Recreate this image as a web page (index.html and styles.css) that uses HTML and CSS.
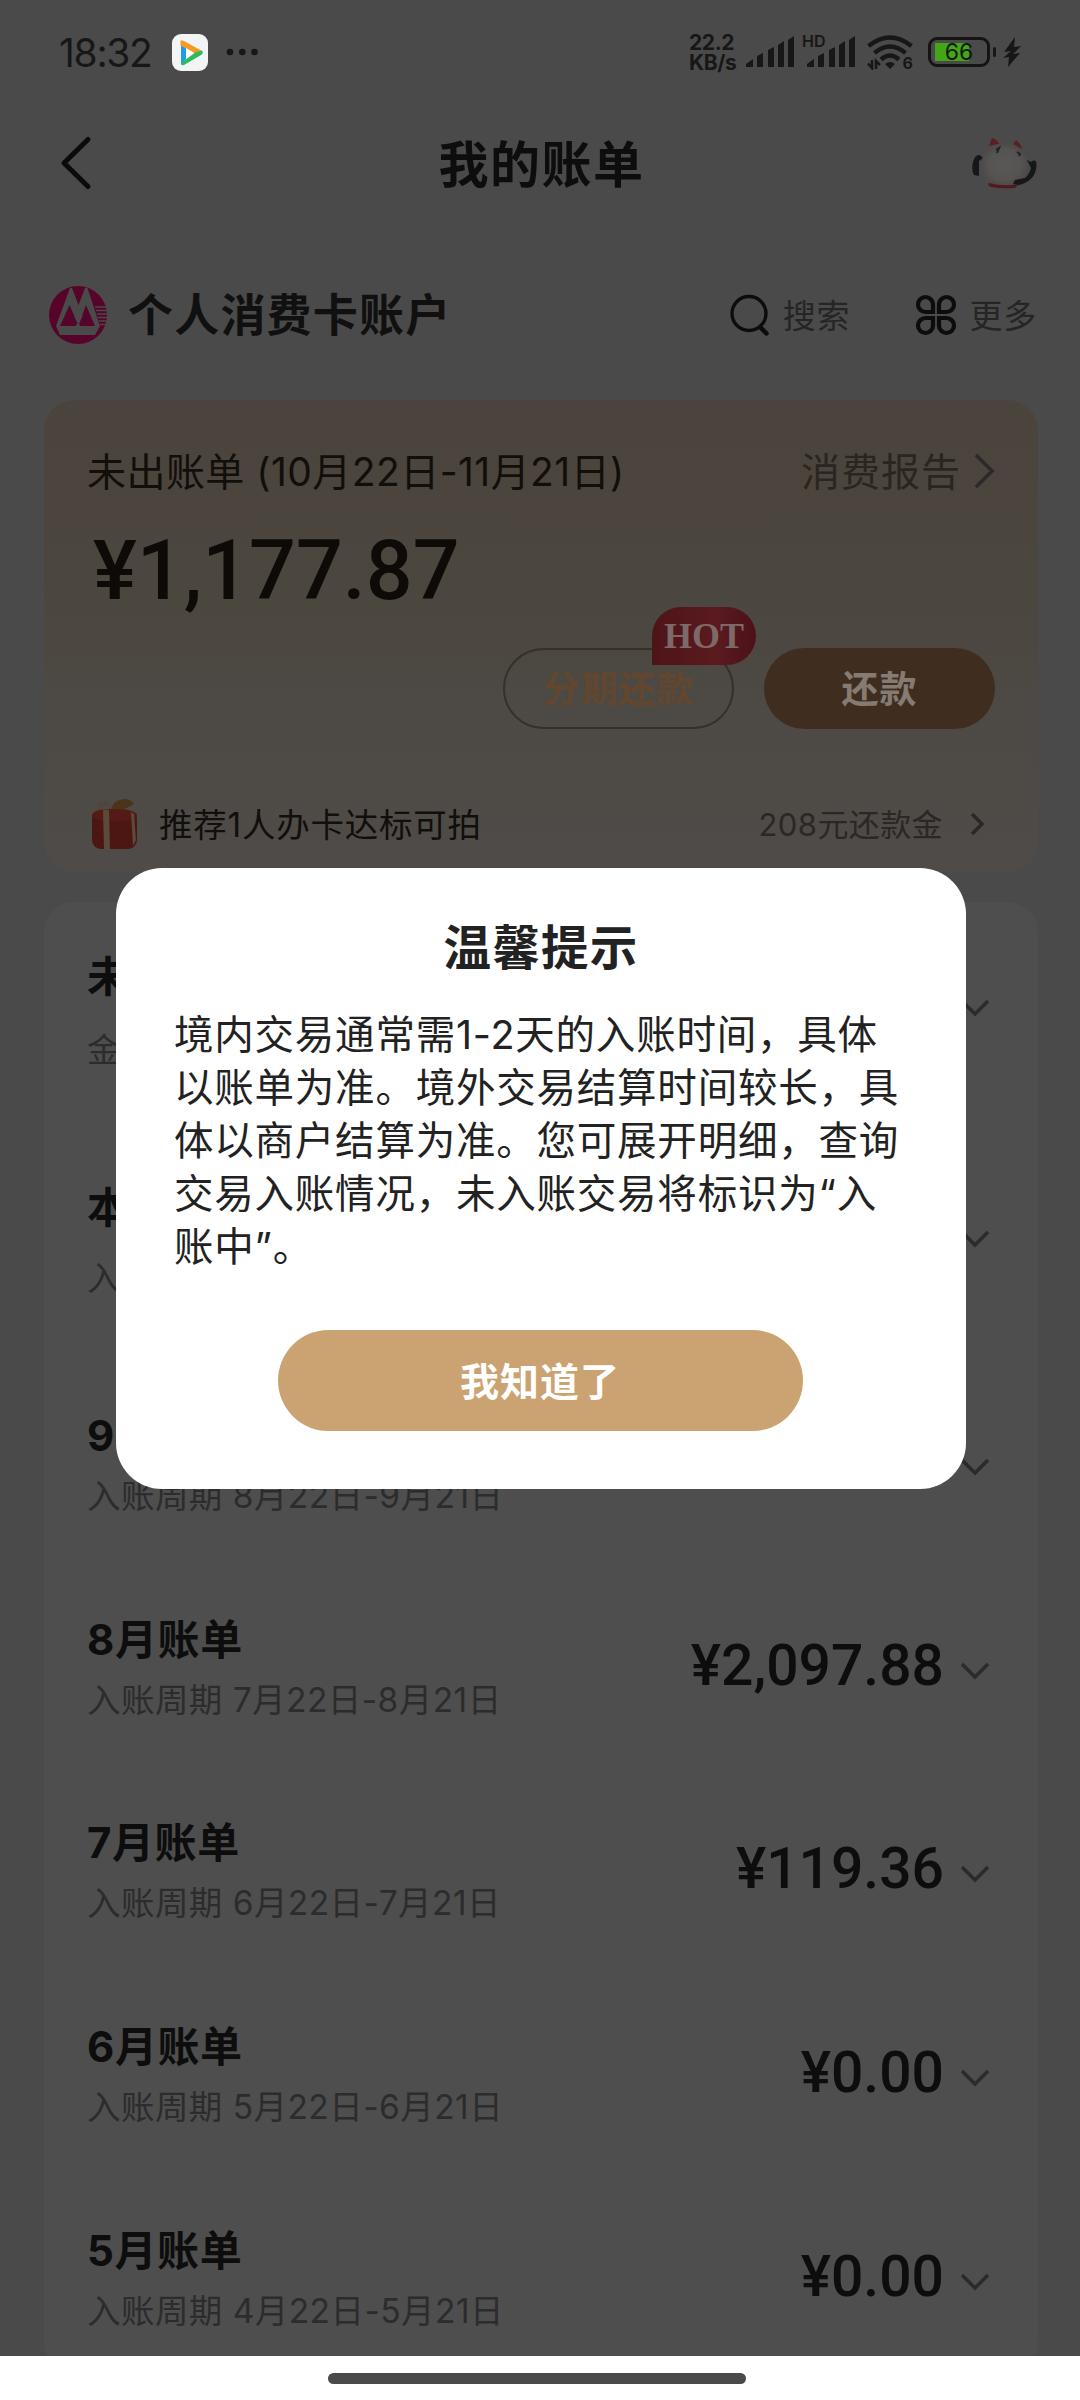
FILE: index.html
```html
<!DOCTYPE html>
<html lang="zh-CN">
<head>
<meta charset="utf-8">
<title>我的账单</title>
<link rel="stylesheet" href="styles.css">
</head>
<body>
<div class="screen">
  <div class="status">
    <span class="time">18:32</span>
    <svg class="app-icon" width="36" height="37" viewBox="0 0 36 37"><rect width="36" height="37" rx="9" fill="#f3f4f6"/><path d="M9 11 14 13V25L9 31Z" fill="#1e9be9"/><path d="M8.500 6.500Q9 6 12 7L30 17 26 21 8.500 11.500Z" fill="#f79a22"/><path d="M30 16.500Q32 19 29 21L12 31Q9 32 9 29L24 18Z" fill="#2bbb5c"/><path d="M14 14 22 19 14 24Z" fill="#fff"/></svg>
    <svg class="dots" width="32" height="8" viewBox="0 0 32 8" fill="#171717"><circle cx="4" cy="4" r="3.300"/><circle cx="16.300" cy="4" r="3.300"/><circle cx="28.500" cy="4" r="3.300"/></svg>
    <div class="status-right">
      <div class="speed"><span>22.2</span><span>KB/s</span></div>
      <svg class="sig" width="48" height="32" viewBox="0 0 48 32" fill="#171717"><path d="M0 31V28L7 23V31ZM11 31V20L17 17V31ZM22 31V14L28 11V31ZM32 31V9L38 5V31ZM42 31V4L48 0V31Z"/></svg>
      <div class="hd-sig"><svg width="50" height="32" viewBox="0 0 50 32" fill="#171717"><path d="M2 31V28L9 23V31ZM13 31V20L19 17V31ZM24 31V14L30 11V31ZM34 31V9L40 5V31ZM44 31V4L50 0V31Z"/></svg><span class="hd">HD</span></div>
      <div class="wifi"><svg width="46" height="35" viewBox="0 0 46 35" fill="none" stroke="#171717" stroke-width="4.500"><path d="M1.500 11Q23-6 44.500 11M7.500 18Q23 5 38.500 18M14 24.500Q23 16.500 32 24.500"/><path d="M18 29Q23 25 28 29L23 34Z" fill="#171717" stroke="none"/><path d="M5 25V33L1 28.500M9 34V26L13 30" stroke-width="2.500"/></svg><span class="six">6</span></div>
      <div class="battery"><span>66</span></div><i class="nub"></i>
      <svg class="bolt" width="18" height="30" viewBox="0 0 18 30" fill="#171717"><path d="M12 0 1 15 8 14 0 21 6 20 5 30 17 16 10 17 18 9 11 10Z"/></svg>
    </div>
  </div>

  <header class="nav">
    <svg width="34" height="56" viewBox="0 0 34 56" fill="none" stroke="#0b0b0b" stroke-width="5" stroke-linecap="round" stroke-linejoin="round"><path d="M29 4.500 5 28 29 51.500"/></svg>
    <h1>我的账单</h1>
    <svg width="66" height="54" viewBox="0 0 66 54"><defs><radialGradient id="body"><stop offset="0" stop-color="#5a5757"/><stop offset=".7" stop-color="#565353"/><stop offset="1" stop-color="#4e4a4a"/></radialGradient></defs><path d="M18 10 21 2Q26 3 28 8ZM42 8 45 4Q50 8 51 13Z" fill="#5b1e22"/><path d="M10 28Q12 7 33 8 53 8 57 28 57 44 46 50H22Q10 44 10 28Z" fill="url(#body)"/><path d="M18 47Q33 51 48 48L44 52Q30 53 20 51 16 50 18 47Z" fill="#54191e"/><path d="M9 19Q4 18 2 26T3 39L8 40V25L12 22ZM56 24 60 32Q58 39 54 42L44 44 42 48 48 49Q63 45 65 33T60 26Z" fill="#161718"/><path d="M25 14 28 12 26 17M46 16 49 18 48 20" fill="none" stroke="#202225" stroke-width="2"/></svg>
  </header>

  <div class="account">
    <svg class="logo" width="60" height="60" viewBox="0 0 60 60"><circle cx="29" cy="30" r="29" fill="#56042a"/><path d="M7 41 21 3H23L29.500 20 36 3H38.500L51 41 46 50H11Z" fill="#4a4a4a"/><path d="M11 41 20.500 20 25.500 31 29.500 23 33 31 37 20 46 41H31L29 36 27 41Z" fill="#56042a"/><path d="M25 31 29.500 21 33.500 31 29.500 40Z" fill="#4a4a4a"/><path d="M46 22H60M47 25.500H60M48 29H60M49 32.500H60M50 36H60M51 39.500H60" stroke="#4a4a4a" stroke-width="1.300"/></svg>
    <h2>个人消费卡账户</h2>
    <a class="tool search"><svg width="40" height="42" viewBox="0 0 40 42" fill="none" stroke="#0c0c0c" stroke-width="3.300"><circle cx="19" cy="19.500" r="17"/><path d="M30 33 36.500 39.500" stroke-width="4.500" stroke-linecap="round"/></svg><span>搜索</span></a>
    <a class="tool more"><svg width="42" height="42" viewBox="0 0 42 42" fill="none" stroke="#0c0c0c" stroke-width="4.200"><path d="M18 18H10.500A7.500 7.500 0 1 1 18 10.500ZM24 18V10.500A7.500 7.500 0 1 1 31.500 18ZM18 24V31.500A7.500 7.500 0 1 1 10.500 24ZM24 24H31.500A7.500 7.500 0 1 1 24 31.500Z"/></svg><span>更多</span></a>
  </div>

  <section class="current">
    <div class="cur-head"><span class="period">未出账单 (10月22日-11月21日)</span><span class="report">消费报告</span>
      <svg width="22" height="36" viewBox="0 0 22 36" fill="none" stroke="#2d2829" stroke-width="3.600"><path d="M3 2 19 18 3 34"/></svg></div>
    <div class="cur-amount">¥1,177.87</div>
    <div class="actions">
      <div class="btn outline">分期还款<span class="hot">HOT</span></div>
      <div class="btn solid">还款</div>
    </div>
    <div class="promo">
      <svg width="48" height="54" viewBox="0 0 48 54"><path d="M20 13Q22 4 29 3 38 0 43 7L30 14Z" fill="#4b351a"/><path d="M8 14Q6 6 12 5T19 13M10 13Q10 7 15 8" fill="none" stroke="#51443a" stroke-width="2"/><rect x="1" y="14" width="45" height="38" rx="9" fill="#4c1613"/><path d="M1 21Q23 28 46 21V18Q44 12 23 12T1 18Z" fill="#531a16"/><path d="M12 13H18L19 52H13ZM40 15 43 17 45 43 42 49Z" fill="#5c4a3b"/></svg>
      <span class="promo-text">推荐1人办卡达标可拍</span><span class="promo-val">208元还款金</span>
      <svg class="promo-arrow" width="14" height="24" viewBox="0 0 14 24" fill="none" stroke="#2b2724" stroke-width="3.500"><path d="M2 2 12 12 2 22"/></svg>
    </div>
  </section>

  <section class="list">
    <div class="row r0"><div><h3>未</h3><p>金</p></div><b></b><svg class="chev" viewBox="0 0 28 18"><path d="M1 2 14 15 27 2"/></svg></div>
    <div class="row r1"><div><h3>本</h3><p>入</p></div><b></b><svg class="chev" viewBox="0 0 28 18"><path d="M1 2 14 15 27 2"/></svg></div>
    <div class="row"><div><h3>9</h3><p>入账周期 8月22日-9月21日</p></div><b></b><svg class="chev" viewBox="0 0 28 18"><path d="M1 2 14 15 27 2"/></svg></div>
    <div class="row"><div><h3>8月账单</h3><p>入账周期 7月22日-8月21日</p></div><b>¥2,097.88</b><svg class="chev" viewBox="0 0 28 18"><path d="M1 2 14 15 27 2"/></svg></div>
    <div class="row"><div><h3>7月账单</h3><p>入账周期 6月22日-7月21日</p></div><b>¥119.36</b><svg class="chev" viewBox="0 0 28 18"><path d="M1 2 14 15 27 2"/></svg></div>
    <div class="row"><div><h3>6月账单</h3><p>入账周期 5月22日-6月21日</p></div><b>¥0.00</b><svg class="chev" viewBox="0 0 28 18"><path d="M1 2 14 15 27 2"/></svg></div>
    <div class="row"><div><h3>5月账单</h3><p>入账周期 4月22日-5月21日</p></div><b>¥0.00</b><svg class="chev" viewBox="0 0 28 18"><path d="M1 2 14 15 27 2"/></svg></div>
  </section>
</div>

<div class="home"><i></i></div>

<div class="dialog">
  <h2>温馨提示</h2>
  <p>境内交易通常需1-2天的入账时间，具体<br>以账单为准。境外交易结算时间较长，具<br>体以商户结算为准。您可展开明细，查询<br>交易入账情况，未入账交易将标识为“入<br>账中”。</p>
  <button>我知道了</button>
</div>
</body>
</html>
```

FILE: styles.css
```css
* { box-sizing: border-box; margin: 0; padding: 0; }
body {
  width: 1080px; height: 2400px; position: relative; overflow: hidden; background: #fff;
  font-family: Inter, "Noto Sans CJK SC", sans-serif; color: #0d0d0d; white-space: nowrap;
}
svg { flex: none; display: block; }
.screen { height: 2356px; overflow: hidden; background: #4a4a4a; }

.status { height: 104px; display: flex; align-items: center; padding: 0 59px 0 59px; color: #171717; }
.time { width: 113px; font-size: 39px; letter-spacing: -1.3px; }
.dots { margin-left: 18px; }
.status-right { margin-left: auto; display: flex; align-items: center; }
.speed { width: 57px; display: flex; flex-direction: column; font-size: 21px; font-weight: 700; line-height: 20px; letter-spacing: -0.4px; padding-top: 2px; }
.hd-sig { position: relative; margin-left: 11px; }
.hd { position: absolute; left: -3px; top: -2px; font-size: 16px; line-height: 15px; font-weight: 600; }
.wifi { position: relative; margin-left: 12px; }
.six { position: absolute; right: 0; bottom: -1px; font-size: 16px; line-height: 16px; font-weight: 700; background: #4a4a4a; }
.battery {
  width: 62px; height: 30px; margin-left: 15px; border: 3px solid #171313; border-radius: 9px;
  display: flex; align-items: center; justify-content: center; font-size: 23px; line-height: 24px; color: #131a0f;
  background: linear-gradient(90deg, #43a616 0 34px, transparent 34px) no-repeat 4px 3px / 34px 18px;
}
.nub { width: 3px; height: 10px; margin-left: 3px; background: #171717; border-radius: 2px; }
.bolt { margin-left: 7px; }

.nav { height: 118px; display: flex; align-items: center; justify-content: space-between; padding: 0 43px 0 59px; }
.nav h1 { font-size: 50px; font-weight: 700; letter-spacing: 1.5px; margin: -5px 0 0 19px; }

.account { height: 178px; display: flex; align-items: center; padding: 8px 43px 0 49px; }
.account h2 { margin: -5px 0 0 19px; font-size: 45px; font-weight: 600; letter-spacing: 1.2px; color: #101010; }
.tool { display: flex; align-items: center; font-size: 33px; letter-spacing: 0.8px; color: #252525; }
.tool span { margin-top: -2px; }
.search { margin-left: auto; gap: 13px; }
.more { margin-left: 65px; gap: 12px; }

.current {
  height: 472px; margin: 0 42px 0 44px; padding: 41px 43px 0 43px; border-radius: 30px;
  background: linear-gradient(180deg, #4b443c 0, #4b463e 40%, #4d4944 65%, #4f4b48 100%);
}
.cur-head { display: flex; align-items: center; height: 56px; font-size: 39px; color: #120e0a; }
.cur-head svg { margin-top: 4px; }
.period { letter-spacing: 0.45px; }
.report { margin-left: auto; margin-right: 12px; letter-spacing: 1px; color: #2a2520; }
.cur-amount { height: 88px; margin-top: 30px; margin-left: 6px; font: 500 82.500px/88px Roboto, sans-serif; color: #0e0a08; }
.actions { display: flex; justify-content: flex-end; gap: 30px; margin-top: 33px; }
.btn { position: relative; width: 231px; height: 81px; padding-bottom: 3px; border-radius: 41px; display: flex; align-items: center; justify-content: center; font-size: 37px; font-weight: 600; letter-spacing: 1px; }
.outline { border: 2px solid #35302a; color: #61472f; }
.solid { background: #3f2e20; color: #857b72; }
.hot {
  position: absolute; left: 147px; top: -43px; width: 104px; height: 58px; border-radius: 29px 29px 29px 0;
  background: linear-gradient(90deg, #4d1416, #5a1a20 60%, #4c1118); color: #7d6a68;
  font: 700 36px/58px "Liberation Serif", serif; text-align: center; letter-spacing: 0;
}
.promo { display: flex; align-items: center; height: 60px; margin-top: 65px; padding: 0 7px 0 4px; }
.promo-text { margin: -4px 0 0 20px; font-size: 33.500px; letter-spacing: 0.75px; color: #120e0c; }
.promo-val { margin: -4px 0 0 auto; font-size: 31px; letter-spacing: 0.4px; color: #2b2724; }
.promo-arrow { margin-left: 27px; margin-right: 4px; }

.list { height: 1470px; margin: 30px 42px 0 44px; padding: 50px 45px 0 43px; border-radius: 30px; background: #4e4e4e; }
.row { height: 203.700px; display: flex; align-items: flex-start; }
.r0 { height: 231px; }
.r1 { height: 228px; }
.row h3 { height: 50px; line-height: 50px; font-size: 42px; font-weight: 700; letter-spacing: 0.6px; }
.row p { height: 40px; line-height: 40px; margin-top: 15px; font-size: 33.500px; letter-spacing: 0.45px; color: #2c2c2c; }
.r0 p { margin-top: 28px; }
.r1 p { margin-top: 25px; }
.row b { margin-left: auto; margin-top: 20px; font: 500 57px/62px Roboto, sans-serif; }
.chev { width: 28px; height: 18px; margin: 47px 4px 0 17px; fill: none; stroke: #2b2b2b; stroke-width: 3.500; }

.home { height: 44px; padding: 17px 0 0 328px; background: #fff; }
.home i { display: block; width: 418px; height: 11px; border-radius: 6px; background: #4a4a4a; }

.dialog {
  position: absolute; left: 116px; top: 868px; width: 850px; height: 621px; border-radius: 46px;
  background: #fff; color: #222; display: flex; flex-direction: column; align-items: center;
}
.dialog h2 { margin-top: 49px; height: 62px; line-height: 62px; font-size: 47.500px; font-weight: 700; letter-spacing: 1.2px; }
.dialog p { align-self: flex-start; margin: 30px 0 0 58px; font-size: 39.500px; line-height: 53px; letter-spacing: 0.78px; }
.dialog button {
  width: 525px; height: 101px; margin: 56px 2px 0 0; padding-bottom: 4px; border: 0; border-radius: 51px; background: #cba271; color: #fff;
  font: 600 39px Inter, "Noto Sans CJK SC", sans-serif; letter-spacing: 1px;
}
```
